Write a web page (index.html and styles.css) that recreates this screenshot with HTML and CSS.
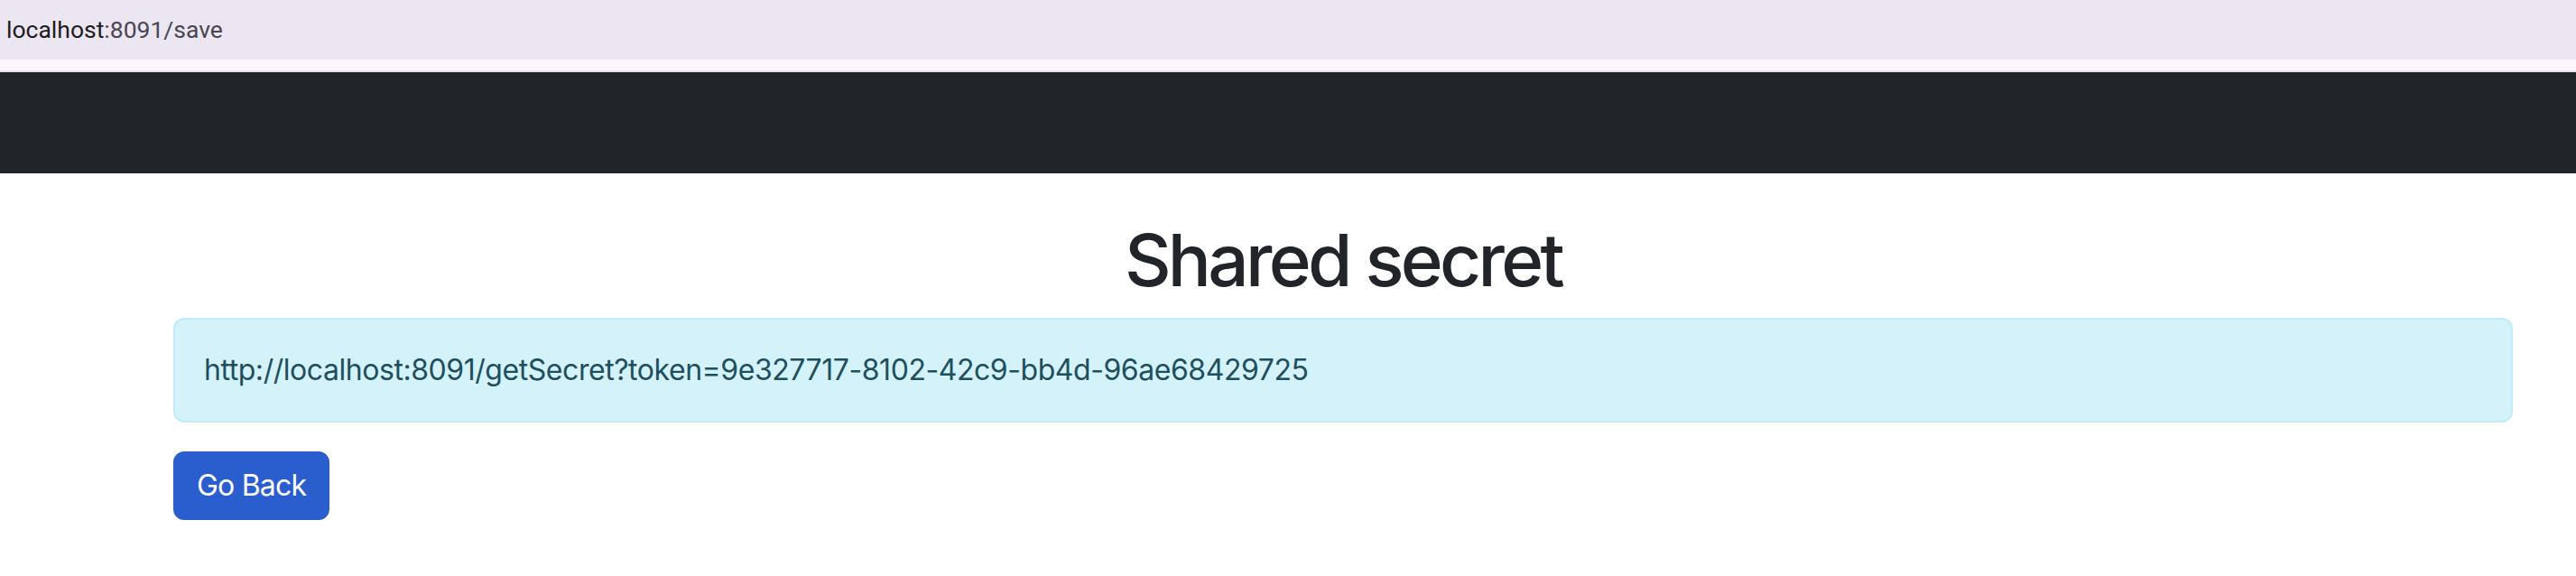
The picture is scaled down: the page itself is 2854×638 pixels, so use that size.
FILE: index.html
```html
<!DOCTYPE html>
<html lang="en">
<head>
<meta charset="utf-8">
<title>Shared secret</title>
<link rel="stylesheet" href="styles.css">
</head>
<body>
<div class="urlbar"><span class="host">localhost</span><span class="path">:8091/save</span></div>
<div class="urlbar-strip"></div>
<nav class="navbar"></nav>
<main class="container">
  <h1 class="title">Shared secret</h1>
  <div class="alert">http://localhost:8091/getSecret?token=9e327717-8102-42c9-bb4d-96ae68429725</div>
  <button class="btn" type="button">Go Back</button>
</main>
</body>
</html>
```

FILE: styles.css
```css
html, body {
  margin: 0;
  padding: 0;
  background: #ffffff;
}
body {
  width: 2854px;
  height: 638px;
  overflow: hidden;
  font-family: Inter, "Liberation Sans", sans-serif;
  color: #212529;
}
.urlbar {
  height: 66px;
  background: #ece6f2;
  display: flex;
  align-items: center;
  padding-left: 7px;
  font-family: Roboto, "Liberation Sans", sans-serif;
  font-size: 26.5px;
  line-height: 66px;
}
.host { color: #1d1b20; }
.path { color: #4a4550; }
.urlbar-strip {
  height: 12px;
  background: #fdf7fd;
  border-bottom: 2px solid #e8e0ea;
}
.navbar {
  height: 112px;
  background: #212529;
}
.container {
  margin-left: 192px;
  width: 2592px;
}
.title {
  margin: 48px 0 16px;
  font-size: 80px;
  line-height: 96px;
  font-weight: 500;
  text-align: center;
  letter-spacing: -3.7px;
  color: #212529;
}
.alert {
  padding: 32px;
  border: 2px solid #bfecf8;
  border-radius: 12px;
  background: #d4f2fa;
  color: #1e4f5e;
  font-size: 32px;
  line-height: 48px;
  letter-spacing: -0.45px;
  margin-bottom: 32px;
}
.btn {
  display: inline-block;
  padding: 12px 24px;
  font-family: Inter, "Liberation Sans", sans-serif;
  font-size: 32px;
  line-height: 48px;
  font-weight: 400;
  letter-spacing: -0.8px;
  color: #ffffff;
  background: #2a5ecf;
  border: 2px solid #2a5ecf;
  border-radius: 12px;
  cursor: pointer;
}
```
